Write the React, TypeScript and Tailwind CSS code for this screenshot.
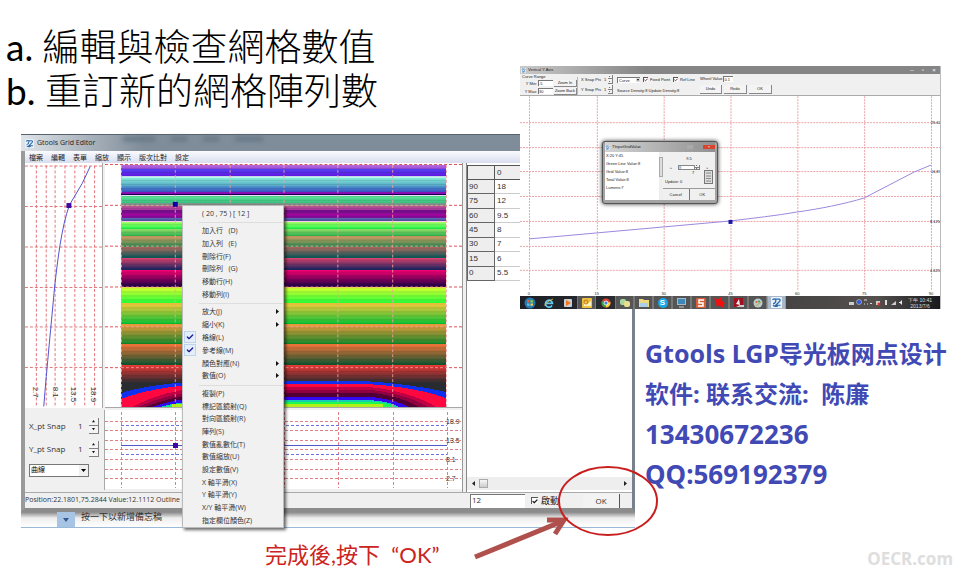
import React, { useState } from 'react';
import { Check } from 'lucide-react';

type MenuEntry = { label: string; submenu?: boolean; checked?: boolean };

const menuBar = ['檔案', '編輯', '表單', '縮放', '顯示', '版次比對', '設定'];

const contextGroups: MenuEntry[][] = [
  [
    { label: '加入行   (D)' },
    { label: '加入列   (E)' },
    { label: '刪除行(F)' },
    { label: '刪除列   (G)' },
    { label: '移動行(H)' },
    { label: '移動列(I)' },
  ],
  [
    { label: '放大(J)', submenu: true },
    { label: '縮小(K)', submenu: true },
    { label: '格線(L)', checked: true },
    { label: '參考線(M)', checked: true },
    { label: '顏色對應(N)', submenu: true },
    { label: '數值(O)', submenu: true },
  ],
  [
    { label: '複製(P)' },
    { label: '標記區鏡射(Q)' },
    { label: '對向區鏡射(R)' },
    { label: '陣列(S)' },
    { label: '數值亂數化(T)' },
    { label: '數值縮放(U)' },
    { label: '設定數值(V)' },
    { label: 'X 軸平滑(X)' },
    { label: 'Y 軸平滑(Y)' },
    { label: 'X/Y 軸平滑(W)' },
    { label: '指定欄位顏色(Z)' },
  ],
];

const gridRows = [
  ['90', '18'],
  ['75', '12'],
  ['60', '9.5'],
  ['45', '8'],
  ['30', '7'],
  ['15', '6'],
  ['0', '5.5'],
];

// Colour bands of the density map: start, end, colour at start, colour at end
const bands: [number, number, string, string][] = [
  [165, 169, '#b868d4', '#9a4ee0'],
  [169, 176, '#5440f4', '#6018e0'],
  [176, 178, '#e8f0ff', '#b0f0f0'],
  [178, 186, '#84ecd8', '#58a8c8'],
  [186, 192, '#4c98cc', '#3c50c4'],
  [192, 194, '#a018c0', '#8008b8'],
  [194, 195, '#180050', '#180050'],
  [195, 196, '#f0e0ff', '#f0e0ff'],
  [196, 203, '#60e898', '#38c080'],
  [203, 206, '#7a9c90', '#889088'],
  [206, 210, '#c05890', '#a838a0'],
  [210, 214, '#700c88', '#8c1098'],
  [214, 218, '#b000a0', '#7c1098'],
  [218, 221, '#6068b8', '#4858a0'],
  [221, 222, '#ffc8f0', '#ffc8f0'],
  [222, 229, '#b0ff68', '#20f84c'],
  [229, 236, '#98e068', '#30b450'],
  [236, 247, '#dc9c64', '#2c8c50'],
  [247, 258, '#b86c60', '#085858'],
  [258, 270, '#e84470', '#182460'],
  [270, 288, '#ff0074', '#100044'],
  [288, 289, '#ffe848', '#ffe848'],
  [289, 304, '#d0ff30', '#20ff38'],
  [304, 325, '#f8c83c', '#04c434'],
  [325, 345, '#f09c3c', '#108828'],
  [345, 366, '#f47438', '#085430'],
  [366, 384, '#ec3834', '#282c30'],
  [384, 409, '#282c30', '#282c30'],
];

const contours = [
  { fill: '#1030f0', d: 'M121 409V394C140 388 165 384 205 382H365C400 384 430 389 447 393V409Z' },
  { fill: '#ff0840', d: 'M121 409V400C140 393 165 387 205 385H365C400 386 430 393 447 399V409Z' },
  { fill: '#c00044', d: 'M130 409C150 398 175 390 205 388H370C395 390 425 399 438 409Z' },
  { fill: '#900040', d: 'M136 409C155 400 178 393 210 391H372C392 393 418 400 430 409Z' },
  { fill: '#500034', d: 'M142 409C160 402 180 396 210 394H375C392 396 412 402 421 409Z' },
  { fill: '#3408f0', d: 'M150 409C165 403 182 399 215 398H372C390 400 404 404 412 409Z' },
  { fill: '#10d0b0', d: 'M158 409C170 404 190 402 220 401H370C382 402 396 404 401 409Z' },
  { fill: '#20f850', d: 'M161 409C175 405 190 403 220 403H370C384 403 392 405 397 409Z' },
  { fill: '#b0f018', d: 'M172 409V405H384V409Z' },
];

const mapColumns = [121, 175, 230, 284, 338, 393, 447];
const mapRows = [164, 205, 246, 287, 327, 368];
const profileLines = [36, 46, 55, 65, 75, 85, 95];

function AppIcon({ className }: { className: string }) {
  return (
    <svg className={className} viewBox="0 0 16 16" aria-hidden="true">
      <rect width="16" height="16" rx="1" fill="#e6f1fa" />
      <path d="M2 4q5-3 5 1t-4 5M5 3h7q3 1 0 4L7 12h7M3 12q3 3 7 1" fill="none" stroke="#2a68a8" strokeWidth="1.8" />
    </svg>
  );
}

function Spinner({ label, className }: { label: string; className: string }) {
  return (
    <span className={`flex flex-col ${className}`}>
      {['up', 'down'].map((dir) => (
        <button
          key={dir}
          aria-label={`${label} ${dir}`}
          className="flex flex-1 items-center justify-center border-r border-b border-[#808080] bg-[#f4f4f4]"
        >
          <svg className="w-1/3" viewBox="0 0 4 3">
            <path d={dir === 'up' ? 'M0 3L2 0L4 3Z' : 'M0 0L2 3L4 0Z'} fill="#111" />
          </svg>
        </button>
      ))}
    </span>
  );
}

function ProfilePlot() {
  return (
    <svg className="h-[245px] w-[78px] border-r border-[#a8a8a8] bg-white" viewBox="25 163 78 245">
      <g stroke="#dc5058" strokeDasharray="3 2" opacity="0.8">
        {profileLines.map((x) => (
          <line key={x} x1={x + 0.5} x2={x + 0.5} y1="164" y2="408" />
        ))}
        {mapRows.map((y) => (
          <line key={y} x1="25" x2="103" y1={y + 0.5} y2={y + 0.5} />
        ))}
      </g>
      <path d="M91 165L83 182L70 204C62 226 58 260 55 287C52 320 47 370 44 408" fill="none" stroke="#5050d0" />
      <rect x="67" y="202" width="5" height="5" fill="#4008a0" />
      <g fontFamily="Liberation Sans, sans-serif" fontSize="8" fill="#333">
        {[['2.7', 33], ['8.1', 53], ['13.5', 72], ['18.9', 92]].map(([t, x]) => (
          <text key={t} transform={`translate(${x} 388) rotate(90)`}>{t}</text>
        ))}
      </g>
    </svg>
  );
}

function DensityMap() {
  return (
    <svg className="h-[245px] w-full border-b border-[#a8a8a8] bg-white" viewBox="105 163 358 245" preserveAspectRatio="none">
      <defs>
        <linearGradient id="density" gradientUnits="userSpaceOnUse" x1="0" x2="0" y1="165" y2="409">
          {bands.map(([y0, y1, c0, c1]) => (
            <React.Fragment key={y0}>
              <stop offset={(y0 - 165) / 244} stopColor={c0} />
              <stop offset={(y1 - 165) / 244} stopColor={c1} />
            </React.Fragment>
          ))}
        </linearGradient>
        <pattern id="scan" width="8" height="4" patternUnits="userSpaceOnUse">
          <rect width="8" height="1" fill="#000" opacity="0.1" />
        </pattern>
      </defs>
      <g stroke="#dc5058" strokeDasharray="3 2">
        {mapRows.map((y) => (
          <line key={y} x1="105" x2="463" y1={y + 0.5} y2={y + 0.5} />
        ))}
      </g>
      <rect x="121" y="165" width="326" height="244" fill="url(#density)" />
      <rect x="121" y="165" width="326" height="218" fill="url(#scan)" />
      <g shapeRendering="crispEdges">
        {contours.map((c) => (
          <path key={c.fill} d={c.d} fill={c.fill} />
        ))}
      </g>
      <g stroke="#f4a0a0" strokeDasharray="3 2" opacity="0.85">
        {mapRows.slice(1).map((y) => (
          <line key={y} x1="121" x2="447" y1={y + 0.5} y2={y + 0.5} />
        ))}
        {mapColumns.map((x) => (
          <line key={x} x1={x + 0.5} x2={x + 0.5} y1="165" y2="408" />
        ))}
      </g>
      <rect x="173" y="202" width="5" height="5" fill="#1000a8" />
    </svg>
  );
}

function SectionPlot() {
  const ys = [421, 430, 440, 449, 459, 469, 478];
  return (
    <svg className="h-[79px] w-full bg-white" viewBox="105 410 357 79" preserveAspectRatio="xMaxYMin slice">
      <g stroke="#dc6068" strokeDasharray="3 2" opacity="0.8">
        {ys.map((y) => (
          <line key={y} x1="105" x2="461" y1={y + 0.5} y2={y + 0.5} />
        ))}
        {mapColumns.map((x) => (
          <line key={x} x1={x + 0.5} x2={x + 0.5} y1="412" y2="488" />
        ))}
      </g>
      <path d="M121 425.5H447M121 454.5H447" stroke="#7070e0" strokeDasharray="3 2" />
      <path d="M121 445.5H447" stroke="#5058c8" />
      <rect x="173" y="443" width="5" height="5" fill="#4008a0" />
      <g fontFamily="Liberation Sans, sans-serif" fontSize="7" fill="#333">
        <text x="446" y="424">18.9</text>
        <text x="446" y="443">13.5</text>
        <text x="446" y="462">8.1</text>
        <text x="446" y="481">2.7</text>
      </g>
    </svg>
  );
}

function SnapControls() {
  return (
    <div className="flex h-[80px] flex-col gap-[7px] border-r border-[#a8a8a8] bg-[#f0f0f0] pt-2 pl-1 text-[8px] text-[#333]">
      {['X_pt Snap', 'Y_pt Snap'].map((name) => (
        <div key={name} className="flex h-4 items-center">
          <span className="w-[49px]">{name}</span>
          <span className="w-[11px]">1</span>
          <Spinner label={name} className="h-4 w-[10px]" />
        </div>
      ))}
      <div className="relative h-[13px] w-[60px]">
        <select
          aria-label="線型"
          className="block h-full w-full appearance-none border border-[#777] bg-white pl-px text-[7px] text-black"
        >
          <option>曲線</option>
        </select>
        <svg className="pointer-events-none absolute top-px right-px h-[11px] w-[9px] bg-[#f0f0f0]" viewBox="0 0 9 11">
          <path d="M2 4H7L4.500 7Z" fill="#000" />
        </svg>
      </div>
    </div>
  );
}

function GridTable() {
  return (
    <div className="flex w-[166px] flex-col border-l border-[#888] bg-white pt-[2px]">
      <table className="h-[116px] w-full border-separate border-spacing-0 font-['Liberation_Sans',sans-serif] text-[8px] leading-none text-[#333]">
        <thead>
          <tr>
            <th className="h-[15px] w-7 border border-[#555] bg-[#eee]" />
            <th className="h-[15px] border-y border-[#555] bg-[#eee] px-[2px] text-left font-normal">0</th>
          </tr>
        </thead>
        <tbody>
          {gridRows.map(([row, value]) => (
            <tr key={row}>
              <th className="h-[14px] border-x border-b border-[#666] bg-[#eee] px-px text-left font-normal">{row}</th>
              <td className="h-[14px] border-b border-[#ccc] px-[2px]">{value}</td>
            </tr>
          ))}
        </tbody>
      </table>
      <div className="mt-auto mb-[2px] flex h-[13px] items-center bg-[#eee]">
        <svg className="h-[5px] w-3" viewBox="0 0 12 5"><path d="M8 0V5L5 2.500Z" fill="#222" /></svg>
        <span className="h-[9px] w-[9px] border border-[#aaa] bg-linear-to-b from-[#f8f8f8] to-[#ccc]" />
        <svg className="ml-auto h-[5px] w-3" viewBox="0 0 12 5"><path d="M4 0V5L7 2.500Z" fill="#222" /></svg>
      </div>
    </div>
  );
}

function ContextMenu() {
  return (
    <div
      role="menu"
      className="absolute top-[71px] left-[161px] flex h-[323px] w-[102px] flex-col border border-[#bbb] bg-[#f1f1f1] text-[7px] leading-none text-[#333] shadow-[2px_2px_3px_rgba(0,0,0,0.6)]"
    >
      <p className="flex h-[14px] items-center pl-[19px]">( 20 , 75 ) [ 12 ]</p>
      {contextGroups.map((group, i) => (
        <React.Fragment key={i}>
          <hr className="my-[2px] ml-4 border-[#ddd]" />
          {group.map((entry) => (
            <button key={entry.label} role="menuitem" className="flex flex-1 items-center pr-1 pb-px text-left whitespace-pre">
              <span className="flex w-[19px] pl-px">
                {entry.checked && (
                  <span className="flex h-3 w-3 items-center justify-center border border-[#bcd4ee] bg-[#e4eefa]">
                    <Check size={8} strokeWidth={4} color="#1c1c98" />
                  </span>
                )}
              </span>
              {entry.label}
              {entry.submenu && (
                <svg className="ml-auto h-[5px] w-[3px]" viewBox="0 0 3 5"><path d="M0 0L3 2.500L0 5Z" fill="#111" /></svg>
              )}
            </button>
          ))}
        </React.Fragment>
      ))}
    </div>
  );
}

function GridEditor() {
  const [enabled, setEnabled] = useState(true);

  return (
    <section className="relative min-w-0 flex-1">
      <div className="border-r-3 border-b-4 border-l-4 border-r-[#78828c] border-b-[#8c8c8c] border-l-[#9a9a9a] bg-[#f0f0f0]">
        <div className="-mx-1 flex h-[17px] items-center border-t border-[#59636d] bg-linear-to-r from-[#dfe4e9] via-[#7f8c99] via-20% to-[#7f8c99] pl-1">
          <AppIcon className="h-[9px] w-[9px]" />
          <h2 className="ml-[3px] text-[7px] text-[#222]">Gtools Grid Editor</h2>
          <div className="ml-7 flex gap-4 pb-2 blur-[2px]" aria-hidden="true">
            <span className="h-1 w-8 bg-[#657585]" />
            <span className="h-1 w-4 bg-[#657585]" />
            <span className="h-1 w-4 bg-[#657585]" />
            <span className="h-1 w-7 bg-[#657585]" />
          </div>
        </div>
        <nav className="flex h-3 items-center gap-2 bg-linear-to-b from-[#fbfbfe] to-[#d9ddee] pl-1 text-[7px] leading-none text-[#222]">
          {menuBar.map((item) => (
            <button key={item}>{item}</button>
          ))}
        </nav>

        <div className="flex h-[329px]">
          <div className="flex w-[80px] flex-col gap-[2px]">
            <ProfilePlot />
            <SnapControls />
          </div>
          <div className="mr-[3px] flex min-w-0 flex-1 flex-col gap-[2px] border-r border-[#999]">
            <DensityMap />
            <SectionPlot />
          </div>
          <GridTable />
        </div>

        <div className="flex h-4 items-center border-t border-[#aaa] text-[8px] text-[#333]">
          <p className="flex-1 text-[7px] whitespace-nowrap">Position:22.1801,75.2844 Value:12.1112 Outline</p>
          <input
            aria-label="數值"
            defaultValue="12"
            className="h-[14px] w-[55px] border-t border-l border-[#777] bg-white px-px pb-1"
          />
          <label className="ml-[6px] flex w-[52px] items-center gap-[3px] text-[9px] leading-none text-[#222]">
            <input
              type="checkbox"
              checked={enabled}
              onChange={(e) => setEnabled(e.target.checked)}
              className="peer sr-only"
            />
            <span className="flex h-[7px] w-[7px] items-center border-t border-l border-[#555] bg-white">
              {enabled && <Check size={7} strokeWidth={5} color="#222" />}
            </span>
            啟動
          </label>
          <button className="mr-3 h-[14px] w-[37px] border-r border-[#555] bg-[#f3f3f3]">OK</button>
        </div>
      </div>

      {/* Slide notes area that shows below the editor */}
      <div className="flex h-4 items-start border-b border-[#9ab8d8] bg-linear-to-b from-[#888] via-[#eee] via-40% to-white pl-9 text-[9px] leading-none text-[#333]">
        <span className="flex h-full w-[18px] items-center justify-center bg-[#a8c4e4]">
          <svg className="h-1 w-[6px]" viewBox="0 0 6 4"><path d="M0 0H6L3 4Z" fill="#335a90" /></svg>
        </span>
        <p className="ml-[6px]">按一下以新增備忘稿</p>
      </div>
      <ContextMenu />
    </section>
  );
}

function InputDialog() {
  return (
    <div className="absolute top-[75px] left-[82px] flex h-[63px] w-[116px] flex-col rounded-[3px] border border-[#555] bg-[#a4a4a4] px-[2px] pb-[3px] shadow-[0_0_4px_rgba(0,0,0,0.8)]">
      <div className="flex h-[10px] items-center gap-[2px] bg-linear-to-r from-[#d4d4d4] to-[#909090]">
        <AppIcon className="h-[5px] w-[5px]" />
        <h3 className="flex-1 text-[4px]">TInputGridValue</h3>
        <button aria-label="Minimize" className="h-1 w-[6px] bg-[#aaa]" />
        <button aria-label="Maximize" className="h-1 w-[6px] bg-[#999]" />
        <button aria-label="Close" className="flex h-1 w-3 items-center justify-center bg-[#d8442c] text-[4px] leading-none text-white">×</button>
      </div>
      <div className="flex min-h-0 flex-1 bg-[#f0f0f0]">
        <div className="flex w-[58px] bg-white pl-px">
          <ul className="flex flex-1 flex-col gap-[3px] pt-px text-[4px] leading-[5px]">
            <li>X:20 Y:45</li>
            <li>Green Line Value:8</li>
            <li>Grid Value:8</li>
            <li>Total Value:8</li>
            <li>Lumens:7</li>
          </ul>
          <span className="flex w-1 flex-col bg-[#eee] py-[5px]">
            <span className="h-5 border border-[#aaa] bg-[#ddd]" />
          </span>
        </div>
        <div className="flex flex-1 flex-col text-[4px] leading-[5px]">
          <p className="pt-1 text-center">9.5</p>
          <div className="flex items-center justify-center gap-[6px] pt-1">
            <span>+</span>
            <span className="flex">
              <input aria-label="Value" defaultValue="8" className="h-[5px] w-[17px] border border-[#888] bg-white text-[#36c]" />
              <Spinner label="Value" className="h-[5px] w-[5px]" />
            </span>
            <span>+</span>
          </div>
          <div className="flex flex-1 items-end justify-between px-[2px] pb-1">
            <p>Update: 0</p>
            <p className="self-start">7</p>
            <svg className="h-[14px] w-[9px]" viewBox="0 0 9 14" aria-hidden="true">
              <rect x=".5" y=".5" width="8" height="13" fill="#ddd" stroke="#777" />
              <path d="M2 3H7M2 6H7M2 8.500H7M2 11H7" stroke="#888" />
            </svg>
          </div>
          <div className="flex h-[13px] border-t border-[#999]">
            <button className="flex-1 border-r border-[#777]">Cancel</button>
            <button className="flex-1">OK</button>
          </div>
        </div>
      </div>
    </div>
  );
}

function Taskbar() {
  const active = 'flex h-full w-[19px] items-center justify-center border-x border-[#777] bg-[#555]';
  const plain = 'flex h-full w-[19px] items-center justify-center';
  return (
    <div className="flex h-[13px] items-center bg-linear-to-r from-[#1c2026] via-[#54504e] via-85% to-[#1a1a1e]">
      <span className={plain}>
        <svg className="h-3 w-3" viewBox="0 0 12 12">
          <circle cx="6" cy="6" r="5.500" fill="#2878b0" />
          <path d="M3 3.500L5.500 3V5.500H3Z" fill="#f06030" />
          <path d="M6.500 3L9 3.500V5.500H6.500Z" fill="#90d040" />
          <path d="M3 6.500H5.500V9L3 8.500Z" fill="#60c0f0" />
          <path d="M6.500 6.500H9V8.500L6.500 9Z" fill="#f8d040" />
        </svg>
      </span>
      <span className={plain}>
        <svg className="h-[10px] w-[10px]" viewBox="0 0 10 10">
          <path d="M8 7.500A3.500 3.500 0 1 1 8.500 5.300H2.500" fill="none" stroke="#60c8f8" strokeWidth="1.700" />
          <path d="M1 8Q0 5 9 1" fill="none" stroke="#f0c840" strokeWidth=".8" />
        </svg>
      </span>
      <span className={plain}>
        <svg className="h-2 w-2" viewBox="0 0 8 8"><rect width="8" height="8" rx="1" fill="#c8d0d8" /><path d="M2 1L7 4L2 7Z" fill="#f07820" /></svg>
      </span>
      <span className={active}>
        <svg className="h-[10px] w-[10px]" viewBox="0 0 10 10"><rect width="10" height="10" rx="1" fill="#f0c040" /><path d="M2 4L5 6L9 3V8H2Z" fill="#fff4c0" /><circle cx="4" cy="4" r="2" fill="none" stroke="#c07810" /></svg>
      </span>
      <span className={plain}>
        <svg className="h-[10px] w-[10px]" viewBox="0 0 10 10">
          <circle cx="5" cy="5" r="4.500" fill="#e04030" />
          <path d="M5 5L1 3A4.500 4.500 0 0 0 5 9.500Z" fill="#38a048" />
          <path d="M5 5L9.300 4A4.500 4.500 0 0 1 5 9.500Z" fill="#f8d030" />
          <circle cx="5" cy="5" r="2" fill="#4080e0" stroke="#fff" strokeWidth=".8" />
        </svg>
      </span>
      <span className={active}>
        <svg className="h-[10px] w-3" viewBox="0 0 12 10"><rect x="1" y="1" width="6" height="6" rx="2" fill="#a8d8a0" /><rect x="5" y="3" width="6" height="6" rx="2" fill="#e8e090" /></svg>
      </span>
      <span className={active}>
        <svg className="h-[10px] w-[10px]" viewBox="0 0 10 10"><path d="M0 1H4L5 2H10V9H0Z" fill="#f0d880" /><path d="M1 5H9V9H1Z" fill="#a8d0e8" /></svg>
      </span>
      <span className={active}>
        <span className="flex h-[10px] w-[10px] items-center justify-center rounded-full bg-[#18a8e8] text-[8px] leading-none font-bold text-white">S</span>
      </span>
      <span className={active}>
        <svg className="h-[10px] w-[9px]" viewBox="0 0 9 10"><rect width="9" height="7" fill="#a8b8c8" /><rect x="1" y="1" width="7" height="5" fill="#4088b8" /><path d="M2 9H7" stroke="#ccc" /></svg>
      </span>
      <span className={active}>
        <svg className="h-[10px] w-[10px]" viewBox="0 0 10 10"><rect width="10" height="10" rx="1" fill="#d86038" /><path d="M8 2H3V5H7V8H2" fill="none" stroke="#fff" strokeWidth="1.500" /></svg>
      </span>
      <span className={active}>
        <svg className="h-[11px] w-[11px]" viewBox="0 0 10 10"><path d="M0 1L4 2L6 0L7 3L10 6L8 7L9 10L5 8L2 8L2 5Z" fill="#f01010" /></svg>
      </span>
      <span className={active}>
        <svg className="h-[10px] w-[10px]" viewBox="0 0 10 10"><rect width="9" height="9" fill="#a01020" /><path d="M2 6L5 1L6 7Z" fill="#eee" /><path d="M2 9H10V7H6Z" fill="#ccc" /></svg>
      </span>
      <span className={active}>
        <svg className="h-[10px] w-[10px]" viewBox="0 0 10 10"><circle cx="5" cy="5" r="4.500" fill="#b8ccd0" /><circle cx="3.500" cy="4" r="1" fill="#e06030" /><circle cx="6" cy="3.500" r="1" fill="#30a050" /><path d="M3 8L8 4" stroke="#c8a040" /></svg>
      </span>
      <span className="flex h-full w-[19px] items-center justify-center border-x border-[#999] bg-[#a8b8c8]">
        <AppIcon className="h-[11px] w-[11px]" />
      </span>
      <svg className="ml-auto h-[7px] w-[55px]" viewBox="0 0 55 7" aria-hidden="true">
        <rect x="0" y="3" width="5" height="3" fill="#ccc" />
        <circle cx="10" cy="3" r="2.500" fill="#3058d8" stroke="#ccc" strokeWidth=".6" />
        <path d="M15 1H18M15 5H16M18 5H19M21 5L22 4L23 5" stroke="#ddd" fill="none" />
        <rect x="27" y="2" width="4" height="4" fill="#ccc" />
        <circle cx="30" cy="5" r="1.500" fill="#e03020" />
        <rect x="36" y="1" width="2" height="5" fill="#ddd" />
        <path d="M42 6L47 2V6Z" fill="#ccc" />
        <path d="M50 3H51L53 1V6L51 4H50Z" fill="#eee" />
      </svg>
      <p className="mr-2 ml-1 text-center text-[5px] leading-[6px] text-[#ddd]">
        下午 10:41
        <br />
        2013/7/6
      </p>
    </div>
  );
}

function AxisToolbar() {
  const button = 'h-[9px] border-r border-b border-[#888] bg-[#f4f4f4]';
  const field = 'border-t border-l border-[#777] bg-white';
  return (
    <div className="flex h-[22px] border-b border-[#aaa] bg-[#f0f0f0] leading-[5px] text-[#222]">
      <fieldset className="w-[58px] border-r border-[#bbb] pl-[2px]">
        <legend className="leading-[5px] whitespace-nowrap">Curve Range</legend>
        {[['y-min', 'Y Min:', '-5', 'Zoom In'], ['y-max', 'Y Max:', '30', 'Zoom Back']].map(([id, label, value, action]) => (
          <div key={id} className="flex h-2 items-center">
            <label htmlFor={id} className="w-4 pr-px text-right whitespace-nowrap">{label}</label>
            <input id={id} defaultValue={value} className={`h-[6px] w-[15px] ${field}`} />
            <button className="ml-px h-[7px] flex-1 border-r border-b border-[#888] bg-[#f4f4f4] leading-[5px] whitespace-nowrap">{action}</button>
          </div>
        ))}
      </fieldset>
      <div className="flex w-[36px] flex-col justify-around pl-[3px]">
        {['X Snap Pts', 'Y Snap Pts'].map((name) => (
          <div key={name} className="flex items-center">
            <span className="w-[23px] whitespace-nowrap">{name}</span>
            <span className="w-1">1</span>
            <Spinner label={name} className="h-[9px] w-[5px]" />
          </div>
        ))}
      </div>
      <div className="flex w-[83px] flex-col justify-around pl-[3px]">
        <div className="flex items-center gap-[3px]">
          <span className="relative flex">
            <select aria-label="Line type" className={`h-[6px] w-[23px] appearance-none pl-px ${field}`}>
              <option>Curve</option>
            </select>
            <svg className="pointer-events-none absolute top-px right-0 h-1 w-1 bg-[#ddd]" viewBox="0 0 4 4"><path d="M1 1H3L2 3Z" /></svg>
          </span>
          {['Fixed Point', 'Ref Line'].map((name) => (
            <label key={name} className="flex items-center gap-[2px] whitespace-nowrap">
              <input type="checkbox" defaultChecked className="peer sr-only" />
              <Check size={5} strokeWidth={5} className="border-t border-l border-[#555] bg-white" />
              {name}
            </label>
          ))}
        </div>
        <p className="whitespace-nowrap">Source Density:8 Update Density:8</p>
      </div>
      <div className="flex flex-col justify-around pl-[3px]">
        <label className="flex items-center gap-px whitespace-nowrap">
          Wheel Value
          <input defaultValue="0.1" className={`h-[6px] w-[10px] ${field}`} />
        </label>
        <div className="flex gap-[2px]">
          <button className={`w-[22px] ${button}`}>Undo</button>
          <button className={`w-[23px] ${button}`}>Redo</button>
          <button className={`w-[23px] ${button}`}>OK</button>
        </div>
      </div>
    </div>
  );
}

function AxisPlot() {
  const xs = [529, 597, 664, 731, 798, 865, 932];
  const ys = [122, 147, 171, 196, 221, 246, 270];
  return (
    <svg className="h-[200px] w-full bg-white" viewBox="520 96 421 200">
      <g stroke="#eca4a8" strokeDasharray="2 1">
        {xs.map((x) => (
          <line key={x} x1={x + 0.5} x2={x + 0.5} y1="96" y2="291" />
        ))}
        {ys.map((y) => (
          <line key={y} x1="520" x2="941" y1={y + 0.5} y2={y + 0.5} />
        ))}
      </g>
      <path d="M529 239L564 236L597 233L664 227L731 221C755 218 775 216 798 212C820 209 845 204 865 198L915 172L932 165" fill="none" stroke="#9c88dc" />
      <rect x="729" y="220" width="4" height="4" fill="#1818a8" />
      <g fontFamily="Liberation Sans, sans-serif" fontSize="4" fill="#222">
        <text x="932" y="124">25.62</text>
        <text x="932" y="173">16.87</text>
        <text x="931" y="223">8.125</text>
        <text x="931" y="272">4.625</text>
        {xs.map((x, i) => (
          <text key={x} x={x} y="295" textAnchor="middle">{i * 15}</text>
        ))}
      </g>
    </svg>
  );
}

function VerticalAxisWindow() {
  return (
    <section className="absolute top-[66px] right-6 w-[421px] border-r border-[#bbb] font-['Liberation_Sans',sans-serif] text-[4px] text-[#222]">
      <div className="flex h-2 items-center bg-linear-to-r from-[#cacaca] via-[#858585] via-30% to-[#858585] pl-px">
        <AppIcon className="h-[5px] w-[5px]" />
        <h2 className="ml-[2px] flex-1 leading-none">Vertical Y Axis</h2>
        <div className="flex w-[34px] justify-around text-[6px] leading-none text-white">
          <button aria-label="Minimize">–</button>
          <button aria-label="Restore">▫</button>
          <button aria-label="Close">×</button>
        </div>
      </div>
      <AxisToolbar />
      <AxisPlot />
      <Taskbar />
      <InputDialog />
    </section>
  );
}

export default function App() {
  return (
    <main className="relative min-h-screen overflow-hidden bg-white font-['Open_Sans','Noto_Sans_CJK_TC',sans-serif]">
      <h1 className="pt-[25px] pb-[21px] pl-[6px] font-['Lato','Noto_Sans_CJK_TC',sans-serif] text-[37px] leading-[44px] text-black">
        <span className="block">a. <span className="font-light">編輯與檢查網格數值</span></span>
        <span className="block">b. <span className="font-light">重訂新的網格陣列數</span></span>
      </h1>

      <div className="flex pl-[21px]">
        <div className="relative flex min-w-0 flex-1">
          <GridEditor />
          {/* Ring and arrow that point out the OK button */}
          <svg className="pointer-events-none absolute right-[-24px] bottom-[-36px] h-[100px] w-[190px]" viewBox="469 464 190 100" aria-hidden="true">
            <path d="M475 557L563 521" stroke="#b0504c" strokeWidth="5" />
            <path d="M547 520L564 520L555 534" fill="none" stroke="#b0504c" strokeWidth="5" />
            <ellipse cx="608" cy="501" rx="49" ry="34" fill="none" stroke="#c81e1e" strokeWidth="2" />
          </svg>
        </div>
        <address className="w-[330px] pt-[199px] pl-[10px] font-['Noto_Sans','Noto_Sans_CJK_SC',sans-serif] text-[24px] leading-[40px] font-bold whitespace-pre text-[#4149b4] not-italic">
          <p><span className="text-[25px]">Gtools LGP</span>导光板网点设计</p>
          <p>软件: 联系交流:  陈廉</p>
          <p className="text-[26px]">13430672236</p>
          <p className="text-[26px]">QQ:569192379</p>
        </address>
      </div>

      <footer className="flex items-center justify-between pt-3 pr-3 pl-[265px]">
        <p className="font-['Lato','Noto_Sans_CJK_TC',sans-serif] text-[22px] leading-[30px] whitespace-pre text-[#cc2420]">完成後,按下  “OK”</p>
        <p className="pt-2 font-['Noto_Sans',sans-serif] text-[17px] leading-5 font-bold text-[#dedede]">OECR.com</p>
      </footer>

      <VerticalAxisWindow />
    </main>
  );
}
